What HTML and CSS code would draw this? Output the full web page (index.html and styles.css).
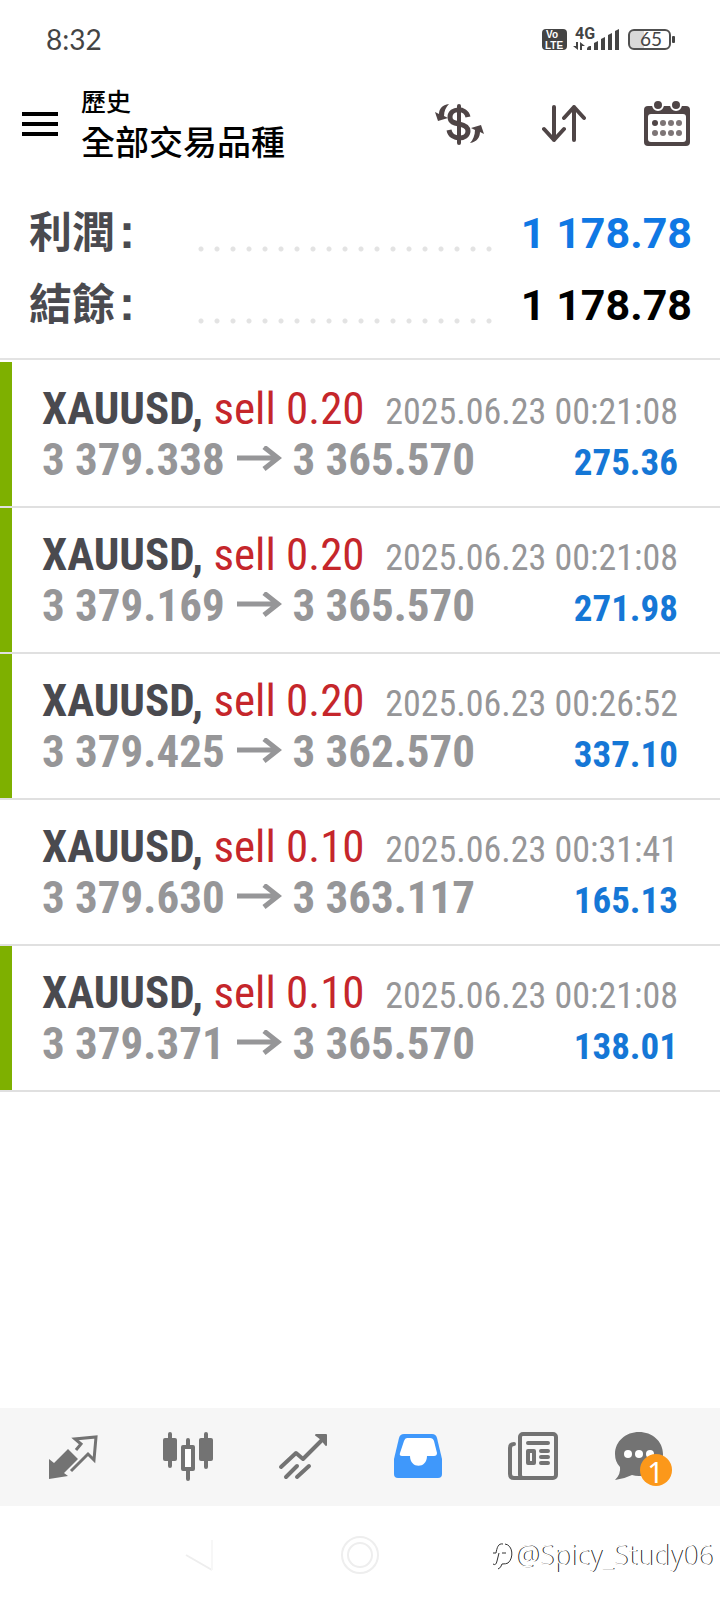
FILE: index.html
```html
<!DOCTYPE html>
<html lang="zh-Hant">
<head>
<meta charset="utf-8">
<meta name="viewport" content="width=device-width, initial-scale=1">
<title>歷史</title>
<link rel="stylesheet" href="styles.css">
</head>
<body>
<div class="screen">
  <div class="status">
    <span class="clock">8:32</span>
    <svg class="status-icons" width="136" height="36" viewBox="0 0 136 36" aria-hidden="true">
      <rect x="2" y="8" width="25" height="21" rx="4" fill="#444"/>
      <g class="volte"><text x="6" y="17">Vo</text><text x="5" y="28">LTE</text></g>
      <text class="network" x="35" y="18">4G</text>
      <path d="M38 21v8l-5-4h3v-4zM40 21v8h2v-4h3zM47 29c0-3 1-4 4-4v4zM54 29v-7l4-2v9zM61 29V18l4-2v13zM68 29V14l4-2v17zM75 29V10l4-2v21z" fill="#444"/>
      <path d="M93 9h11v19H93q-3 0-3-4V13q0-4 3-4z" fill="#d9d9d9"/>
      <rect x="89" y="9" width="41" height="19" rx="5" fill="none" stroke="#505050" stroke-width="2"/>
      <rect x="132" y="15" width="3" height="7" rx="1" fill="#444"/>
      <text class="battery" x="100" y="25">65</text>
    </svg>
  </div>

  <header class="header">
    <button class="icon-button" aria-label="選單">
      <svg width="36" height="24" viewBox="0 0 36 24"><path d="M0 2h36M0 12h36M0 22h36" stroke="#000" stroke-width="4"/></svg>
    </button>
    <div class="titles">
      <p class="subtitle">歷史</p>
      <h1 class="title">全部交易品種</h1>
    </div>
    <div class="actions">
      <button class="icon-button" aria-label="貨幣">
        <svg width="50" height="48" viewBox="0 0 50 48" fill="none" stroke="#4f4546" stroke-linecap="round">
          <path d="M25 6v37" stroke-width="4"/>
          <path d="M34 17c-2-10-18-9-18 0 0 5 4 6 9 7 5 1 9 3 9 7 0 9-17 10-19-1" stroke-width="5" stroke-linecap="butt"/>
          <path d="M15 4C8 5 5 9 5 14l-4-2 3 9 10-3-4-2c0-5 2-9 5-12zM36 43c7-1 10-6 10-11l4 2-3-9-10 3 4 2c0 5-2 10-5 13z" fill="#4f4546" stroke="none"/>
        </svg>
      </button>
      <button class="icon-button" aria-label="排序">
        <svg width="44" height="48" viewBox="0 0 44 48" fill="none" stroke="#4f4546" stroke-width="4" stroke-linecap="round" stroke-linejoin="round"><path d="M12 7v33M2 29l10 11 10-11M32 40V7M22 18L32 7l10 11"/></svg>
      </button>
      <button class="icon-button" aria-label="日期">
        <svg width="46" height="48" viewBox="0 0 46 48">
          <rect y="6" width="46" height="40" rx="4" fill="#4f4546"/>
          <rect x="4" y="14" width="38" height="28" rx="3" fill="#fff"/>
          <g fill="#4f4546" stroke="#fff" stroke-width="2"><circle cx="14" cy="5" r="5"/><circle cx="32" cy="5" r="5"/></g>
          <g fill="#7d7576"><circle cx="11" cy="23" r="3" fill="#4f4546"/><circle cx="19" cy="23" r="3"/><circle cx="27" cy="23" r="3"/><circle cx="35" cy="23" r="3"/><circle cx="11" cy="33" r="3"/><circle cx="19" cy="33" r="3"/><circle cx="27" cy="33" r="3"/><circle cx="35" cy="33" r="3"/></g>
        </svg>
      </button>
    </div>
  </header>

  <dl class="summary">
    <div class="summary-row"><dt>利潤<span class="colon">:</span></dt><dd class="profit">1 178.78</dd></div>
    <div class="summary-row"><dt>結餘<span class="colon">:</span></dt><dd>1 178.78</dd></div>
  </dl>

  <ul class="deals">
    <li class="deal deal-closed">
      <p class="line"><span class="symbol">XAUUSD, <span class="side">sell 0.20</span></span><time class="time">2025.06.23 00:21:08</time></p>
      <p class="line"><span class="prices">3 379.338 <svg class="arrow" width="47" height="29" viewBox="0 0 47 29"><path d="M2 12h40M29 1l14 11-14 11" fill="none" stroke="#969698" stroke-width="5"/></svg> 3 365.570</span><span class="amount">275.36</span></p>
    </li>
    <li class="deal deal-closed">
      <p class="line"><span class="symbol">XAUUSD, <span class="side">sell 0.20</span></span><time class="time">2025.06.23 00:21:08</time></p>
      <p class="line"><span class="prices">3 379.169 <svg class="arrow" width="47" height="29" viewBox="0 0 47 29"><path d="M2 12h40M29 1l14 11-14 11" fill="none" stroke="#969698" stroke-width="5"/></svg> 3 365.570</span><span class="amount">271.98</span></p>
    </li>
    <li class="deal deal-closed">
      <p class="line"><span class="symbol">XAUUSD, <span class="side">sell 0.20</span></span><time class="time">2025.06.23 00:26:52</time></p>
      <p class="line"><span class="prices">3 379.425 <svg class="arrow" width="47" height="29" viewBox="0 0 47 29"><path d="M2 12h40M29 1l14 11-14 11" fill="none" stroke="#969698" stroke-width="5"/></svg> 3 362.570</span><span class="amount">337.10</span></p>
    </li>
    <li class="deal">
      <p class="line"><span class="symbol">XAUUSD, <span class="side">sell 0.10</span></span><time class="time">2025.06.23 00:31:41</time></p>
      <p class="line"><span class="prices">3 379.630 <svg class="arrow" width="47" height="29" viewBox="0 0 47 29"><path d="M2 12h40M29 1l14 11-14 11" fill="none" stroke="#969698" stroke-width="5"/></svg> 3 363.117</span><span class="amount">165.13</span></p>
    </li>
    <li class="deal deal-closed">
      <p class="line"><span class="symbol">XAUUSD, <span class="side">sell 0.10</span></span><time class="time">2025.06.23 00:21:08</time></p>
      <p class="line"><span class="prices">3 379.371 <svg class="arrow" width="47" height="29" viewBox="0 0 47 29"><path d="M2 12h40M29 1l14 11-14 11" fill="none" stroke="#969698" stroke-width="5"/></svg> 3 365.570</span><span class="amount">138.01</span></p>
    </li>
  </ul>

  <nav class="tabs">
    <button class="icon-button" aria-label="報價">
      <svg width="52" height="52" viewBox="0 0 52 52">
        <path d="M2 27l5 4 14-14 10 10-14 14 4 3-19 3z" fill="#737373"/>
        <path d="M29 18l5-6-6-5 21-2-2 23-6-6-17 17" fill="none" stroke="#737373" stroke-width="3"/>
      </svg>
    </button>
    <button class="icon-button" aria-label="圖表">
      <svg width="52" height="52" viewBox="0 0 52 52" fill="#737373">
        <path d="M8 2v32M44 2v33M26 8v8M26 38v9" stroke="#737373" stroke-width="4" stroke-linecap="round"/>
        <rect x="1" y="6" width="14" height="23" rx="2"/><rect x="37" y="6" width="14" height="23" rx="2"/>
        <rect x="21" y="15" width="10" height="22" fill="#fff" stroke="#737373" stroke-width="4" stroke-linejoin="round"/>
      </svg>
    </button>
    <button class="icon-button" aria-label="交易">
      <svg width="52" height="52" viewBox="0 0 52 52" fill="none" stroke="#737373" stroke-width="4" stroke-linecap="round" stroke-linejoin="round">
        <path d="M4 35l15-14 7 6L47 6M9 45l11-11M20 45l12-11"/><path d="M39 3h10v10l-4-5-2-2z" fill="#737373" stroke-width="2"/>
      </svg>
    </button>
    <button class="icon-button" aria-label="歷史" aria-current="page">
      <svg width="52" height="52" viewBox="0 0 52 52">
        <path d="M12 2h28q4 0 5 4l5 21v15q0 4-4 4H6q-4 0-4-4V27L7 6q1-4 5-4z" fill="#3f98fb"/>
        <path d="M15 6h23q3 0 4 3l3 12q0 3-3 3h-7c0 13-17 13-17 0h-8q-3 0-2-3l4-12q1-3 3-3z" fill="#fff"/>
      </svg>
    </button>
    <button class="icon-button" aria-label="新聞">
      <svg width="52" height="52" viewBox="0 0 52 52" fill="none" stroke="#737373" stroke-width="4" stroke-linecap="round">
        <rect x="13" y="2" width="36" height="44" rx="3" fill="#f8f8f8"/>
        <path d="M7 12q-4 0-4 4v26q0 4 4 4h10M21 11h20M34 19h7M34 25h7M34 31h7"/><rect x="21" y="19" width="6" height="12" stroke-linejoin="round"/>
      </svg>
    </button>
    <button class="icon-button message" aria-label="訊息">
      <svg width="70" height="52" viewBox="0 0 70 52">
        <path d="M26 0c13 0 24 9 24 22S39 44 26 44q-4 0-7-1-8 4-17 5 6-6 5-13Q2 30 2 22C2 9 13 0 26 0z" fill="#737373"/>
        <g fill="#fff"><circle cx="15" cy="22" r="4"/><circle cx="26" cy="22" r="4"/><circle cx="37" cy="22" r="4"/></g>
      </svg>
      <span class="badge">1</span>
    </button>
  </nav>

  <footer class="system">
    <svg class="system-back" width="32" height="36" viewBox="0 0 32 36" fill="none" stroke="#eee" stroke-width="2"><path d="M2 18l26 15"/><path d="M28 33V3" stroke="#f7f7f7"/></svg>
    <svg class="system-home" width="40" height="40" viewBox="0 0 40 40" fill="none" stroke="#eee" stroke-width="2"><circle cx="20" cy="20" r="18"/><circle cx="20" cy="20" r="12"/></svg>
    <p class="watermark">
      <svg width="24" height="30" viewBox="0 0 24 30" fill="none" stroke="#333" stroke-width="1"><path d="M12 4c-5-1-6 4-7 9H2M8 13l-2 8q-1 5-4 3M14 4c8 1 9 14 3 19q-2 1-6 1-1 4-4 5M11 13h4"/></svg><span>@Spicy_Study06</span>
    </p>
  </footer>
</div>
</body>
</html>
```
FILE: styles.css
```css
* { box-sizing: border-box; }

body {
  margin: 0;
  background: #fff;
  color: #000;
  font-family: Roboto, "Noto Sans CJK TC", sans-serif;
}

p, h1, dl, dd, ul { margin: 0; padding: 0; }

.screen { display: flex; flex-direction: column; min-height: 100vh; }

.icon-button {
  display: flex;
  padding: 0;
  border: 0;
  background: none;
}

.status {
  display: flex;
  align-items: center;
  justify-content: space-between;
  height: 78px;
  padding: 0 44px 0 46px;
}
.clock { color: #444; font: 28px/32px Lato, sans-serif; }
.volte { fill: #fff; font: 700 10px "Liberation Sans", sans-serif; }
.network { fill: #444; font: 700 16px Roboto, sans-serif; }
.battery { fill: #444; font: 19px Lato, sans-serif; }

.header {
  display: flex;
  align-items: center;
  gap: 23px;
  height: 92px;
  padding: 0 30px 0 22px;
}
.titles { flex: 1; padding-bottom: 2px; font-family: "Noto Sans CJK TC", sans-serif; }
.subtitle { font-size: 25px; font-weight: 500; line-height: 36px; }
.title { font-size: 34px; font-weight: 500; line-height: 46px; }
.actions { display: flex; gap: 58px; }

.summary {
  padding: 27px 28px 17px;
  border-bottom: 2px solid #e3e3e3;
}
.summary-row {
  display: flex;
  line-height: 72px;
  font-size: 43px;
  font-weight: 700;
}
.summary-row dt { flex: none; width: 165px; padding-left: 1px; color: #4a4a4f; }
.summary-row dd { display: flex; flex: 1; gap: 26px; }
.summary-row dd::before {
  content: "";
  flex: 1;
  background: radial-gradient(circle, #e3e3e3 2px, transparent 3px) 0 44px / 16px 16px repeat-x;
}
.colon { margin-left: 4px; font-family: "Liberation Sans", sans-serif; font-size: 48px; line-height: 1; }
.profit { color: #0f78e4; }

.deals { flex: 1; padding-top: 2px; list-style: none; }
.deal {
  height: 146px;
  padding: 21px 42px 0;
  border-bottom: 2px solid #e0e0e0;
}
.deal-closed { box-shadow: inset 12px 0 #7eb000; }
.line {
  display: flex;
  align-items: baseline;
  justify-content: space-between;
  height: 51px;
  white-space: nowrap;
  line-height: 51px;
  font-family: "Roboto Condensed", Roboto, sans-serif;
}
.symbol { color: #4a4a4f; font-size: 45px; font-weight: 700; }
.side { color: #c5262b; font-weight: 400; }
.time { color: #969698; font-size: 36px; }
.prices { color: #969698; font-size: 45px; font-weight: 700; }
.amount { color: #1577d6; font-size: 37px; font-weight: 700; }

.tabs {
  display: grid;
  grid-template-columns: repeat(6, 1fr);
  justify-items: center;
  height: 98px;
  padding: 24px 15px 0;
  background: #f6f6f6;
}
.message { position: relative; }
.badge {
  position: absolute;
  left: 27px;
  top: 22px;
  width: 32px;
  height: 32px;
  border-radius: 16px;
  background: #fc981a;
  color: #fff;
  font: 29px/36px "Noto Sans", sans-serif;
  text-align: center;
}

.system {
  display: grid;
  grid-template-columns: 1fr 40px 1fr;
  align-items: center;
  height: 94px;
  padding-top: 4px;
}
.system-back { justify-self: center; margin-left: 60px; }
.watermark {
  display: flex;
  align-items: center;
  justify-content: flex-end;
  padding-right: 7px;
  color: #fff;
  text-shadow: 1px 0 0 #222;
  font: 300 27px/36px "Noto Sans", sans-serif;
}
```
